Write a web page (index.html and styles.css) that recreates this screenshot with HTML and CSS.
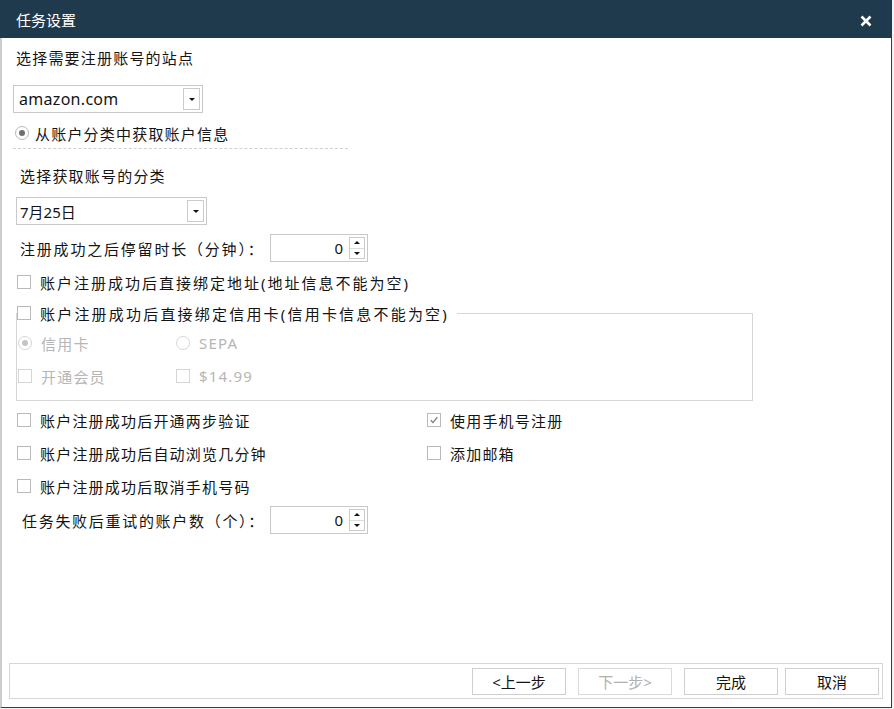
FILE: index.html
```html
<!DOCTYPE html>
<html lang="zh-CN">
<head>
  <meta charset="UTF-8">
  <title>任务设置</title>
  <link rel="stylesheet" href="styles.css">
</head>
<body>
  <div class="window">
    <div class="titlebar">
      <span class="title">任务设置</span>
      <span class="close">
        <svg width="12" height="12" viewBox="0 0 12 12"><path d="M1.5 1.5 L10.5 10.5 M10.5 1.5 L1.5 10.5" stroke="#fff" stroke-width="2.6"/></svg>
      </span>
    </div>

    <div class="body">
      <div class="content">
        <div class="label">选择需要注册账号的站点</div>
        <div class="combo site">
          <span class="combo-text">amazon.com</span>
          <span class="combo-btn"><i class="arrow-down"></i></span>
        </div>

        <div class="option radio-row"><span class="radio on"></span>从账户分类中获取账户信息</div>
        <div class="separator"></div>

        <div class="label sub">选择获取账号的分类</div>
        <div class="combo category">
          <span class="combo-text">7月25日</span>
          <span class="combo-btn"><i class="arrow-down"></i></span>
        </div>

        <div class="field-row">
          <span class="field-label">注册成功之后停留时长（分钟）：</span>
          <div class="spin">
            <span class="spin-value">0</span>
            <span class="spin-btns">
              <span class="spin-btn"><i class="arrow-up"></i></span>
              <span class="spin-btn"><i class="arrow-down"></i></span>
            </span>
          </div>
        </div>

        <div class="option address wide"><span class="check"></span>账户注册成功后直接绑定地址(地址信息不能为空)</div>

        <fieldset class="card-group">
          <legend><span class="option wider"><span class="check"></span>账户注册成功后直接绑定信用卡(信用卡信息不能为空)</span></legend>
          <div class="group-row first">
            <div class="option disabled"><span class="radio on"></span>信用卡</div>
            <div class="option disabled"><span class="radio"></span>SEPA</div>
          </div>
          <div class="group-row">
            <div class="option disabled"><span class="check"></span>开通会员</div>
            <div class="option disabled"><span class="check"></span>$14.99</div>
          </div>
        </fieldset>

        <div class="options-grid">
          <div class="option"><span class="check"></span>账户注册成功后开通两步验证</div>
          <div class="option"><span class="check checked"><svg width="10" height="10" viewBox="0 0 10 10"><path d="M1.8 5.2 L4 7.6 L8.3 2.2" fill="none" stroke="#7a7a7a" stroke-width="1.3"/></svg></span>使用手机号注册</div>
          <div class="option"><span class="check"></span>账户注册成功后自动浏览几分钟</div>
          <div class="option"><span class="check"></span>添加邮箱</div>
          <div class="option"><span class="check"></span>账户注册成功后取消手机号码</div>
        </div>

        <div class="field-row retry">
          <span class="field-label">任务失败后重试的账户数（个）：</span>
          <div class="spin">
            <span class="spin-value">0</span>
            <span class="spin-btns">
              <span class="spin-btn"><i class="arrow-up"></i></span>
              <span class="spin-btn"><i class="arrow-down"></i></span>
            </span>
          </div>
        </div>
      </div>

      <div class="footer">
        <button>&lt;上一步</button>
        <button class="disabled-btn">下一步&gt;</button>
        <button>完成</button>
        <button class="cancel">取消</button>
      </div>
    </div>
  </div>
</body>
</html>
```

FILE: styles.css
```css
* {
  box-sizing: border-box;
  margin: 0;
  padding: 0;
}

body {
  width: 894px;
  height: 709px;
  overflow: hidden;
  background-color: #f3f3f3;
  font-family: "Noto Sans", "Noto Sans CJK SC", sans-serif;
  font-size: 15px;
  color: #141414;
}

.window {
  width: 892px;
  height: 708px;
  display: flex;
  flex-direction: column;
  background-color: #fff;
}

.titlebar {
  height: 38px;
  flex-shrink: 0;
  background-color: #1f3a4d;
  color: #fff;
  display: flex;
  align-items: center;
  justify-content: space-between;
  padding: 0 20px 0 16px;
}

.title {
  font-size: 15px;
  font-family: "Noto Sans CJK SC", sans-serif;
}

.close {
  display: flex;
  margin-top: 4px;
}

.body {
  flex: 1;
  display: flex;
  flex-direction: column;
  border-left: 2px solid #cdcdcd;
  border-right: 1px solid #2c4150;
  border-bottom: 1px solid #2c4150;
}

.content {
  flex: 1;
  padding: 6px 0 0 11px;
  letter-spacing: 1.2px;
}

.label {
  height: 26px;
  display: flex;
  align-items: center;
  margin-left: 3px;
}

.label.sub {
  margin-left: 7px;
  margin-top: 13px;
}

/* combo boxes */
.combo {
  width: 190px;
  height: 28px;
  border: 1px solid #c9c9c9;
  display: flex;
  align-items: center;
  justify-content: space-between;
  padding: 0 2px 0 5px;
  letter-spacing: 0;
  margin-top: 15px;
}

.combo.site .combo-text {
  font-size: 16px;
  letter-spacing: 0.3px;
}

.combo.category {
  width: 191px;
  margin-left: 3px;
  margin-top: 9px;
  padding-left: 3px;
}

.combo-btn {
  width: 17px;
  height: 22px;
  border: 1px solid #cbcbcb;
  display: flex;
  align-items: center;
  justify-content: center;
}

.arrow-down {
  width: 0;
  height: 0;
  border-left: 3px solid transparent;
  border-right: 3px solid transparent;
  border-top: 3px solid #111;
}

.arrow-up {
  width: 0;
  height: 0;
  border-left: 3px solid transparent;
  border-right: 3px solid transparent;
  border-bottom: 3px solid #111;
}

/* radio / check */
.option {
  display: flex;
  align-items: center;
  height: 26px;
  white-space: nowrap;
}

.radio {
  width: 14px;
  height: 14px;
  border: 1px solid #b9b9b9;
  border-radius: 50%;
  margin-right: 6px;
  display: flex;
  align-items: center;
  justify-content: center;
  flex-shrink: 0;
}

.radio.on::after {
  content: "";
  width: 6px;
  height: 6px;
  border-radius: 50%;
  background-color: #707070;
}

.check {
  width: 14px;
  height: 14px;
  border: 1px solid #b9b9b9;
  background-color: #fff;
  margin-right: 9px;
  display: flex;
  align-items: center;
  justify-content: center;
  flex-shrink: 0;
}

.radio-row {
  margin-top: 7px;
  margin-left: 2px;
}

.separator {
  width: 335px;
  border-top: 1px dashed #cfcfcf;
  margin-top: 2px;
}

/* spinner rows */
.field-row {
  display: flex;
  align-items: center;
  height: 28px;
  margin-top: 9px;
  margin-left: 7px;
  letter-spacing: 1.8px;
}

.field-row.retry {
  margin-top: 7px;
  margin-left: 9px;
  letter-spacing: 1.7px;
}

.field-label {
  width: 250px;
  flex-shrink: 0;
}

.retry .field-label {
  width: 248px;
}

.spin {
  width: 98px;
  height: 28px;
  border: 1px solid #c9c9c9;
  display: flex;
  align-items: center;
  padding: 2px;
  letter-spacing: 0;
}

.spin-value {
  flex: 1;
  text-align: right;
  padding-right: 6px;
  font-size: 15px;
}

.spin-btns {
  width: 16px;
  height: 22px;
  display: flex;
  flex-direction: column;
  border: 1px solid #cbcbcb;
}

.spin-btn {
  flex: 1;
  display: flex;
  align-items: center;
  justify-content: center;
}

.spin-btn + .spin-btn {
  border-top: 1px solid #dcdcdc;
}

.wide {
  letter-spacing: 2px;
}

.wider {
  letter-spacing: 2.2px;
}

.address {
  margin-top: 7px;
  margin-left: 4px;
}

/* credit card group */
.card-group {
  width: 737px;
  margin: 5px 0 0 3px;
  border: 1px solid #d6d6d6;
  padding: 0 0 11px 0;
  min-width: 0;
}

.card-group legend {
  padding: 0 8px 0 0;
}

.group-row {
  display: grid;
  grid-template-columns: 158px auto;
  height: 26px;
  margin-top: 7px;
  margin-left: 1px;
}

.group-row.first {
  margin-top: 4px;
}

.group-row .radio,
.group-row .check {
  margin-right: 9px;
}

.disabled {
  color: #b6b6b6;
}

.disabled .radio,
.disabled .check {
  border-color: #d6d6d6;
}

.disabled .radio.on::after {
  background-color: #c4c4c4;
}

.options-grid {
  display: grid;
  grid-template-columns: 410px auto;
  row-gap: 7px;
  margin-top: 6px;
  margin-left: 4px;
}

/* footer buttons */
.footer {
  height: 36px;
  margin: 0 8px 8px 7px;
  border: 1px solid #d6d6d6;
  display: flex;
  justify-content: flex-end;
  align-items: center;
  padding-right: 3px;
}

.footer button {
  width: 94px;
  height: 27px;
  border: 1px solid #cfcfcf;
  background-color: #fff;
  font-family: "Noto Sans", "Noto Sans CJK SC", sans-serif;
  font-size: 15px;
  color: #141414;
  cursor: pointer;
}

.footer button + button {
  margin-left: 12px;
}

.footer .cancel {
  margin-left: 7px;
}

.footer .disabled-btn {
  color: #b0b0b0;
  border-color: #dadada;
}
```
